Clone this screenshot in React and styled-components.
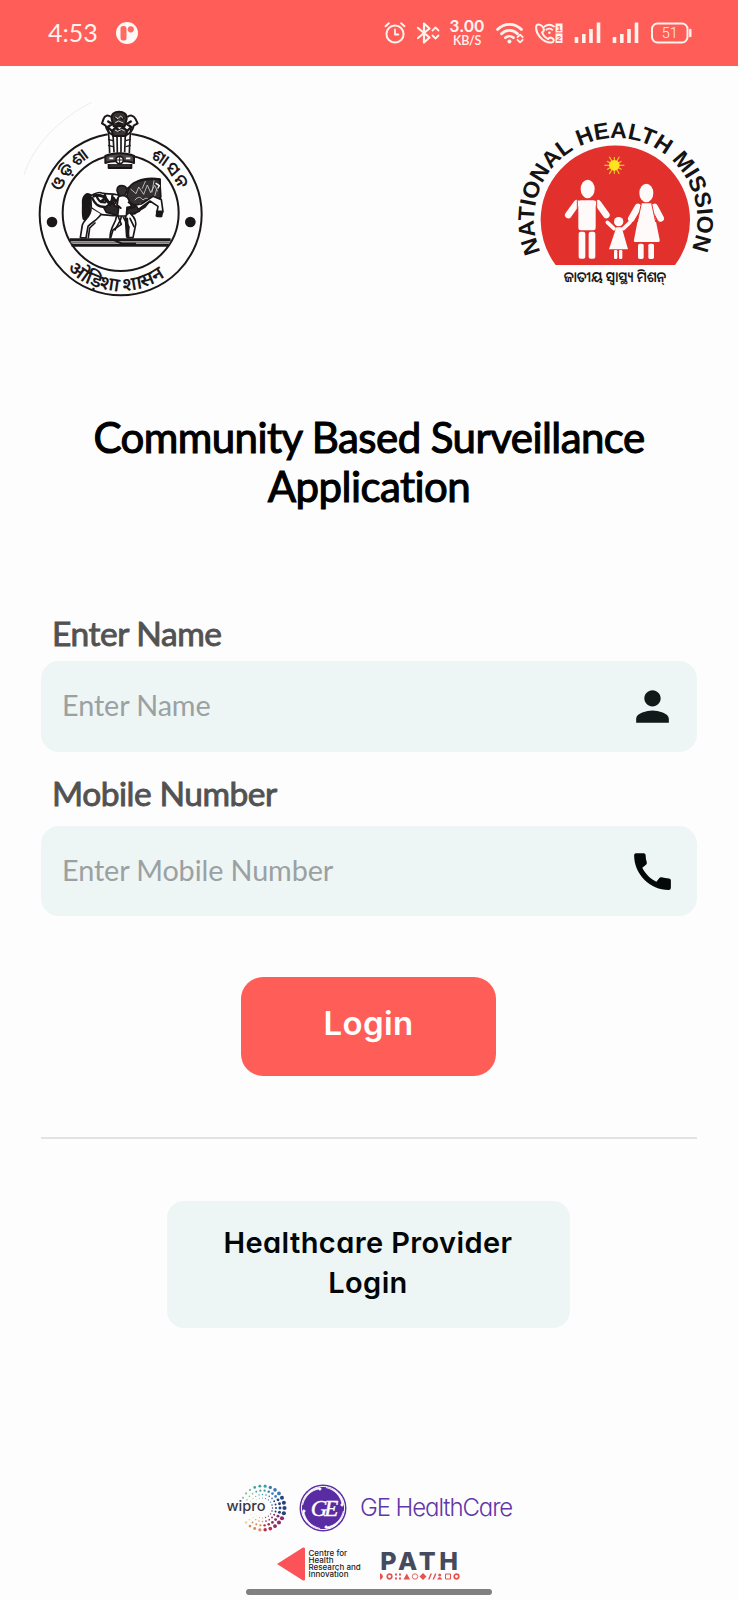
import React from 'react';
import styled, { createGlobalStyle } from 'styled-components';
import { MdPerson, MdCall } from 'react-icons/md';

const point = (cx, cy, r, deg) => [
  cx + r * Math.cos((deg * Math.PI) / 180),
  cy + r * Math.sin((deg * Math.PI) / 180)
];

const StatusIcons = () => (
  <StyledStatusIcons>
    <StyledIcon $w={22} viewBox="0 0 22 24">
      <circle cx="11" cy="13" r="8.6" strokeWidth="2" />
      <path d="M11 8.5v5h3.4" strokeWidth="1.8" />
      <path d="M1.5 5.2l3.4-2.9M20.5 5.2l-3.4-2.9" strokeWidth="2" />
    </StyledIcon>
    <StyledIcon $w={24} $left={10} viewBox="0 0 24 24">
      <path d="M2 7l11.5 9.5L8 21.500V2.500l5.500 5L2 17" strokeWidth="2.200" />
      <path d="M16.500 9.500l3-3 3 3M16.500 14.500l3 3 3-3" strokeWidth="1.800" />
    </StyledIcon>
    <StyledSpeed>
      <StyledSpeedValue>3.00</StyledSpeedValue>
      <StyledSpeedUnit>KB/S</StyledSpeedUnit>
    </StyledSpeed>
    <StyledIcon $w={29} $left={11} viewBox="0 0 29 24">
      <path d="M1.500 8.500a16.500 16.500 0 0 1 24 0" strokeWidth="2.800" />
      <path d="M5.500 12.800a11 11 0 0 1 16 0" strokeWidth="2.800" />
      <path d="M9.300 16.800a6 6 0 0 1 8.200 0" strokeWidth="2.600" />
      <circle cx="13.400" cy="20.600" r="2" fill="#fff3ee" stroke="none" />
      <path d="M21.500 16.200l2.600-2.600 2.600 2.600M21.500 18.800l2.600 2.600 2.600-2.600" strokeWidth="1.800" />
    </StyledIcon>
    <StyledIcon $w={29} $left={9} viewBox="0 0 29 24">
      <path d="M2.500 4.500c-2 7 6 17.500 15 17 2.500-.3 3-3 1-4.200-1.700-1-3.200-1-4.300.8C11 16.500 9 14 8 11.500c2-1 2.300-2.500 1.400-4.600C8.200 4 4.200 2.500 2.500 4.500z" strokeWidth="2" />
      <path d="M10.500 5.500a8 8 0 0 1 9.500 0M12.300 8.800a5 5 0 0 1 6 0" strokeWidth="1.800" />
      <circle cx="15.400" cy="11.800" r="1.300" fill="#fff3ee" stroke="none" />
      <rect x="21.500" y="2.500" width="7" height="9" fill="#fff3ee" stroke="none" />
      <rect x="21.500" y="12.500" width="7" height="9.500" fill="#fff3ee" stroke="none" />
      <StyledSim x="25" y="10">1</StyledSim>
      <StyledSim x="25" y="20.300">2</StyledSim>
    </StyledIcon>
    <Signal left={11} />
    <Signal left={11} />
    <StyledIcon $w={41} $left={12} viewBox="0 0 41 24">
      <rect x="1" y="2.500" width="35.500" height="19" rx="5.500" strokeWidth="2" />
      <path d="M39.300 9v6" strokeWidth="2.400" />
      <StyledCharge x="18.700" y="17">51</StyledCharge>
    </StyledIcon>
  </StyledStatusIcons>
);

const Signal = ({ left }) => (
  <StyledIcon $w={27} $left={left} viewBox="0 0 27 24">
    <path d="M2.500 22v-6M9.800 22v-9M17 22V8M24.500 22V1.500" strokeWidth="3.600" strokeLinecap="butt" />
  </StyledIcon>
);

const StateEmblem = () => (
  <svg width="200" height="210" viewBox="0 0 600 630" fill="none" stroke="#1b1718">
    <defs>
      <path id="emblem-left" d="M124 290A188 188 0 0 1 222 181" />
      <path id="emblem-right" d="M390 188A190 190 0 0 1 480 290" />
      <path id="emblem-bottom" d="M142 524A229 229 0 0 0 456 528" />
    </defs>
    <path d="M12 240C40 150 120 70 215 22" stroke="#ededed" strokeWidth="3" />
    <circle cx="302" cy="358" r="243" strokeWidth="6" />
    <circle cx="302" cy="354" r="174" strokeWidth="6" />
    <circle cx="96" cy="381" r="16" fill="#1b1718" stroke="none" />
    <circle cx="511" cy="381" r="16" fill="#1b1718" stroke="none" />
    {/* lion capital */}
    <path d="M262 100h73l-4 75 14 14-8 30h-72l-10-30 12-14z" fill="#fdfdfd" stroke="none" />
    <g strokeWidth="6" strokeLinejoin="round">
      <path d="M275 72c-2-15 8-22 22-22s25 7 23 22l-6 22h-33z" fill="#3a3435" />
      <path d="M273 66c-9-7-19-5-22 5l-5 14 11 7c3 14 11 23 22 28M322 66c9-7 19-5 24 5l7 14-12 7c-3 14-11 23-22 28" />
      <path d="M262 78l15 9-14 9 15 14M335 78l-15 9 14 9-15 14M283 66l9 8M312 66l-8 8M287 86h23" strokeWidth="7" />
      <path d="M276 108l12-12 10 12 11-12 13 12-5 15h-38z" fill="#3a3435" />
      <path d="M286 66l8 5 8-8 7 7M286 83l10-5 14 6M285 105l8 4 12-6 9 5" stroke="#ddd" strokeWidth="3" />
      <path d="M264 98c3 24 4 47 5 76M333 98c-3 24-4 47-5 76M279 118l3 54M291 122l1 51M303 122v51M316 118l-2 54" strokeWidth="5" />
      <path d="M264 133l15 4M264 151l15 4M332 133l-15 4M332 151l-15 4" strokeWidth="4" />
      <path d="M256 183c23-11 64-11 86 0v21c-22-8-64-8-86 0z" fill="#4d4748" />
      <path d="M266 207v12h68v-12" fill="#343031" />
      <path d="M268 190h12M318 190h13" stroke="#fff" strokeWidth="5" />
      <circle cx="299" cy="195" r="11" fill="#fff" strokeWidth="5" />
      <path d="M299 186v18M290 195h18" strokeWidth="3" />
    </g>
    {/* horse and warrior */}
    <g strokeWidth="5" strokeLinejoin="round" strokeLinecap="round">
      <path d="M214 301c-15-11-26 2-26 20 1 17-2 35 2 50 6 8 15 5 17-5 5-20-2-38 10-53z" fill="#1b1718" />
      <path d="M212 302c12-3 19-14 34-8 14 5 26 0 48 6l60-42c20-9 43-9 66-6l2 76-17-2-15-14-25 22-20 22-65 6-35-3-31-20z" fill="#fdfdfd" />
      <path d="M325 286c3-26 46-37 94-33l3 52-9 12-18-5-20 24-26 16-20-12-12-25z" fill="#343031" />
      <path d="M252 339l25-18 26 24 25-5 35-8-5 17-22 8-48 3-29-8z" fill="#2b2728" />
      <path d="M222 303c17-8 24 3 34 3M244 320l12-11 14 19 10-19 12 18" strokeWidth="9" />
      <path d="M216 308c9 18 17 28 39 28M230 303c4 14 12 20 25 19M255 300c-3 13 3 20 14 22M277 302c-4 17 5 29 18 35" strokeWidth="7" />
      <path d="M333 283l15 13 8-20 15 22 11-28 10 23 12-22 8 17M345 315c10-13 18-8 24 0 9-9 16-5 19 2M350 336c8-12 17-13 25-8M376 259l-9 21M402 257l-6 34M410 282l-6 22" stroke="#d5d3d3" strokeWidth="2.500" />
      <path d="M213 340c1 25-20 32-26 50l-6 38 17 1 6-35c14-14 29-20 39-36" fill="#fdfdfd" />
      <path d="M225 384l-16 15-4 29M289 365c-1 20-19 29-19 63M305 362c-3 22-17 31-20 43" />
      <path d="M331 355c14 13 21 27 14 44l-6 29h-16l4-32-17-29" fill="#fdfdfd" />
      <path d="M390 318l24 16-5 29 13 1 7-14-5-36-25-10-35 23-17 3 8 13z" fill="#fdfdfd" />
      <path d="M410 349h15v15h-13z" fill="#1b1718" />
      <path d="M291 287c0-10 6-15 15-15s16 6 15 17l-9 16h-14z" fill="#343031" />
      <path d="M296 305c12-7 28-2 31 11l8 19-14 2-2 26h-26l3-25-14-7z" fill="#fdfdfd" />
      <path d="M294 363l10 25-25 17-7 23M316 364l4 62M330 370l12 25" />
      <path d="M320 372l4 52" strokeWidth="9" />
      <path d="M294 310l-3 20 11 9M326 322l17 8" strokeWidth="6" />
      <path d="M408 265l10 7-4 7" stroke="#fff" strokeWidth="4" />
    </g>
    <path d="M150 434h302" strokeWidth="8" />
    <path d="M155 451h291" strokeWidth="9" />
    <path d="M152 442h297" stroke="#777" strokeWidth="7" />
    <path d="M279 434l27 12h42" strokeWidth="6" />
    <StyledOdia $size={50}><textPath href="#emblem-left" textLength="136">ଓଡ଼ିଶା</textPath></StyledOdia>
    <StyledOdia $size={50}><textPath href="#emblem-right" textLength="132">ଶାସନ</textPath></StyledOdia>
    <StyledOdia $size={58}><textPath href="#emblem-bottom">ओड़िशा शासन</textPath></StyledOdia>
  </svg>
);

const rays = Array.from({ length: 12 }, (_, i) => i * 30);

const HealthMissionLogo = () => (
  <StyledMission width="225" height="195" viewBox="0 0 675 585">
    <defs>
      <path id="mission-arc" d="M107 441A245 245 0 1 1 557 441" />
    </defs>
    <path d="M152 480A224 224 0 1 1 510 480z" fill="#e2312d" />
    <StyledMissionText>
      <textPath href="#mission-arc" textLength="960" lengthAdjust="spacingAndGlyphs">NATIONAL HEALTH MISSION</textPath>
    </StyledMissionText>
    <g stroke="#f4c62a" strokeWidth="3.500">
      {rays.map(deg => {
        const [x, y] = point(328, 181, deg % 60 ? 25 : 30, deg);
        return <path key={deg} d={`M328 181L${x} ${y}`} />;
      })}
    </g>
    <circle cx="328" cy="181" r="16" fill="#ffe31f" />
    <g fill="#fffafa">
      <ellipse cx="248" cy="252" rx="21" ry="28" />
      <rect x="220" y="286" width="52" height="90" rx="7" />
      <rect x="221" y="380" width="20" height="81" rx="6" />
      <rect x="251" y="380" width="20" height="81" rx="6" />
      <ellipse cx="424" cy="264" rx="21" ry="28" />
      <path d="M412 295h25q5 0 6 6l21 103q1 7-6 7h-66q-7 0-5-7l20-103q1-6 5-6z" />
      <rect x="399" y="416" width="17" height="46" rx="5" />
      <rect x="430" y="416" width="17" height="46" rx="5" />
      <circle cx="341" cy="350" r="14" />
      <path d="M334 367h16l19 66h-57z" />
      <rect x="327" y="435" width="10" height="27" rx="4" />
      <rect x="342" y="435" width="10" height="27" rx="4" />
    </g>
    <g stroke="#fffafa" strokeLinecap="round" strokeWidth="20">
      <path d="M215 295l-25 35M279 295l25 35M399 306l-20 35M449 306l18 34" />
      <path d="M307 352l20 19M375 352l-20 19" strokeWidth="11" />
    </g>
    <g stroke="#e2312d" strokeWidth="3">
      <path d="M217 284v50M275 284v50M409 296l-12 55M440 296l12 55" />
    </g>
    <StyledOdiaCaption x="330" y="531" textLength="308" lengthAdjust="spacingAndGlyphs">
      ଜାତୀୟ ସ୍ୱାସ୍ଥ୍ୟ ମିଶନ୍
    </StyledOdiaCaption>
  </StyledMission>
);

const rings = [
  { r: 22, size: 2.1, count: 26 },
  { r: 17.5, size: 1.5, count: 26 },
  { r: 13.5, size: 1, count: 24 },
  { r: 10, size: 0.75, count: 20 }
];

const dotColor = deg => {
  if (deg < 25 || deg > 325) return '#27427c';
  if (deg < 60) return '#8a2b67';
  if (deg < 90) return '#b32f52';
  if (deg < 125) return '#dc8a58';
  if (deg < 180) return '#ead98c';
  if (deg < 240) return '#8cbf9a';
  if (deg < 285) return '#3b9fa0';
  return '#3c78b5';
};

const WiproLogo = () => (
  <svg width="61" height="50" viewBox="0 0 61 50">
    {rings.map(ring =>
      Array.from({ length: ring.count }, (_, i) => {
        const deg = (i * 360) / ring.count;
        if (deg > 150 && deg < 205) return null;
        const [x, y] = point(36.5, 25, ring.r, deg);
        const weight = 0.5 + 0.5 * Math.cos(((deg - 10) * Math.PI) / 360) ** 2;
        return <circle key={`${ring.r}-${i}`} cx={x} cy={y} r={ring.size * weight} fill={dotColor(deg)} />;
      })
    )}
    <StyledWipro x="0.500" y="28.300" textLength="39" lengthAdjust="spacingAndGlyphs">wipro</StyledWipro>
  </svg>
);

const swooshes = [0, 90, 180, 270];

const GeLogo = () => (
  <StyledGe width="48" height="48" viewBox="0 0 48 48">
    <circle cx="24" cy="24" r="23.500" fill="#5a2ca3" />
    <circle cx="24" cy="24" r="21.600" fill="none" stroke="#fff" strokeWidth="1" />
    {swooshes.map(deg => (
      <path
        key={deg}
        transform={`rotate(${deg} 24 24)`}
        d="M3.500 21C4.500 12 11 4.500 20 3.500c2 0 3 1.500 1.500 2.500-1 .6-2-.2-1.500-1C12 6.500 6 12 3.500 21z"
        fill="#fff"
        stroke="#fff"
        strokeWidth="0.600"
      />
    ))}
    <StyledMonogram x="24" y="32">GE</StyledMonogram>
  </StyledGe>
);

const PathMarks = () => (
  <svg width="80" height="7" viewBox="0 0 80 7" fill="#e5524f">
    <path d="M0 0q6 3.500 0 7z" />
    <circle cx="9.500" cy="3.500" r="2.300" fill="none" stroke="#e5524f" strokeWidth="1.700" />
    <path d="M15 .5h2v2h-2zM19 .5h2v2h-2zM15 4.500h2v2h-2zM19 4.500h2v2h-2zM23.500 6.500l3.300-6 3.300 6z" />
    <circle cx="35" cy="3.500" r="2.700" fill="none" stroke="#e5524f" strokeWidth=".9" />
    <path d="M43 0l3.500 3.500L43 7l-3.500-3.500zM48 6.500L50.500.5H52l-2.500 6zM52.500 6.500L55 .5h1.500l-2.500 6zM57 6.500q2.700-5 5.400 0z" />
    <circle cx="59.700" cy="2" r="1.500" />
    <path d="M65.500 1h5v5h-5z" fill="none" stroke="#e5524f" />
    <circle cx="76.500" cy="3.500" r="2.300" fill="none" stroke="#e5524f" strokeWidth="1.700" />
  </svg>
);

const Field = ({ label, placeholder, height, gap, top, icon }) => (
  <StyledField $top={top} $gap={gap}>
    <StyledLabel>{label}</StyledLabel>
    <StyledInputBox $height={height}>
      <StyledInput placeholder={placeholder} aria-label={label} />
      {icon}
    </StyledInputBox>
  </StyledField>
);

const App = () => (
  <StyledPage>
    <GlobalStyle />
    <StyledStatusBar>
      <StyledTime>4:53</StyledTime>
      <svg width="22" height="22" viewBox="0 0 22 22">
        <circle cx="11" cy="11" r="11" fill="#fff8f5" />
        <rect x="4.500" y="4" width="6" height="14.500" rx="2.500" fill="#ff6b63" />
        <circle cx="14.800" cy="7.300" r="3.100" fill="#ff6b63" />
      </svg>
      <StatusIcons />
    </StyledStatusBar>
    <StyledHeader>
      <StateEmblem />
      <HealthMissionLogo />
    </StyledHeader>
    <StyledTitle>Community Based Surveillance<br />Application</StyledTitle>
    <StyledForm onSubmit={e => e.preventDefault()}>
      <Field label="Enter Name" placeholder="Enter Name" height={91} gap={8} top={0} icon={<MdPerson size={49} color="#13191a" />} />
      <Field label="Mobile Number" placeholder="Enter Mobile Number" height={90} gap={13} top={21} icon={<MdCall size={49} color="#050808" />} />
      <StyledLoginButton>Login</StyledLoginButton>
      <StyledDivider />
      <StyledProviderButton type="button">Healthcare Provider<br />Login</StyledProviderButton>
    </StyledForm>
    <StyledFooter>
      <StyledPartners>
        <WiproLogo />
        <GeLogo />
        <StyledGeName>GE HealthCare</StyledGeName>
      </StyledPartners>
      <StyledPartners $second>
        <svg width="28" height="34" viewBox="0 0 28 34">
          <path d="M0 17L26 .5Q28 0 28 2v30q0 2-2 1.500z" fill="#fb5358" />
        </svg>
        <StyledCentre>Centre for<br />Health<br />Research and<br />Innovation</StyledCentre>
        <StyledPathLogo>
          <StyledPathName>PATH</StyledPathName>
          <PathMarks />
        </StyledPathLogo>
      </StyledPartners>
      <StyledHomeBar />
    </StyledFooter>
  </StyledPage>
);

const GlobalStyle = createGlobalStyle`
  * {
    box-sizing: border-box;
  }

  body {
    margin: 0;
    background-color: #fdfdfd;
  }
`;

const StyledPage = styled.div`
  width: 738px;
  height: 1600px;
  display: flex;
  flex-direction: column;
  overflow: hidden;
  background-color: #fdfdfd;
  font-family: Lato, sans-serif;

  svg {
    flex-shrink: 0;
  }
`;

const StyledStatusBar = styled.div`
  height: 66px;
  padding: 0 46px 0 48px;
  display: flex;
  align-items: center;
  background-color: #ff5d58;
  color: #fff3ee;
`;

const StyledTime = styled.span`
  width: 68px;
  padding-bottom: 2px;
  font-size: 25px;
`;

const StyledStatusIcons = styled.div`
  margin-left: auto;
  display: flex;
  align-items: center;
`;

const StyledIcon = styled.svg`
  width: ${props => props.$w}px;
  height: 24px;
  margin-left: ${props => props.$left || 0}px;
  fill: none;
  stroke: #fff3ee;
  stroke-linecap: round;
  stroke-linejoin: round;
`;

const StyledSim = styled.text`
  font: bold 8px "Liberation Sans", sans-serif;
  fill: #ff5d58;
  stroke: none;
  text-anchor: middle;
`;

const StyledCharge = styled.text`
  font: 300 14.5px Roboto, sans-serif;
  fill: #fff3ee;
  stroke: none;
  text-anchor: middle;
`;

const StyledSpeed = styled.div`
  width: 36px;
  margin-left: 9px;
  padding-bottom: 1px;
  display: flex;
  flex-direction: column;
  align-items: center;
`;

const StyledSpeedValue = styled.span`
  font-size: 17px;
  font-weight: bold;
  line-height: 15px;
  letter-spacing: 0.4px;
`;

const StyledSpeedUnit = styled.span`
  font-size: 12.5px;
  font-weight: 600;
  line-height: 15px;
  letter-spacing: -0.3px;
`;

const StyledHeader = styled.div`
  padding: 29px 8px 0 20px;
  display: flex;
  justify-content: space-between;
`;

const StyledOdia = styled.text`
  font-family: "Noto Sans Oriya", "Noto Sans Devanagari", "Noto Sans", sans-serif;
  font-size: ${props => props.$size}px;
  font-weight: 600;
  fill: #1b1718;
  stroke: none;
`;

const StyledOdiaCaption = styled.text`
  font: 600 44px "Noto Sans Oriya", "Noto Sans", sans-serif;
  fill: #1b1718;
  text-anchor: middle;
`;

const StyledMission = styled.svg`
  margin-top: 10px;
`;

const StyledMissionText = styled.text`
  font: bold 68px "Liberation Sans", sans-serif;
  fill: #151313;
`;

const StyledTitle = styled.h1`
  margin: 108px 0 0;
  font-size: 42px;
  font-weight: 400;
  line-height: 49px;
  letter-spacing: -0.55px;
  text-align: center;
  color: #000;
  -webkit-text-stroke: 1.1px #000;
`;

const StyledForm = styled.form`
  margin: 102px 41px 0;
  display: flex;
  flex-direction: column;
`;

const StyledField = styled.div`
  margin-top: ${props => props.$top}px;
  display: flex;
  flex-direction: column;
  gap: ${props => props.$gap}px;
`;

const StyledLabel = styled.span`
  padding-left: 11px;
  font-size: 33.5px;
  line-height: 40px;
  letter-spacing: -0.45px;
  color: #525252;
  -webkit-text-stroke: 0.9px #525252;
`;

const StyledInputBox = styled.div`
  height: ${props => props.$height}px;
  padding: 0 20px 0 21px;
  display: flex;
  align-items: center;
  border-radius: 18px;
  background-color: #eef5f5;
`;

const StyledInput = styled.input`
  flex: 1;
  min-width: 0;
  padding: 0 0 3px;
  border: none;
  outline: none;
  background: none;
  font-family: inherit;
  font-size: 28.8px;
  letter-spacing: -0.1px;

  &::placeholder {
    color: #9ba1a2;
    opacity: 1;
  }
`;

const StyledLoginButton = styled.button`
  align-self: center;
  width: 255px;
  height: 99px;
  margin: 61px 1px 0 0;
  padding: 0 0 8px;
  border: none;
  border-radius: 22px;
  background-color: #ff5d58;
  font-family: Inter, sans-serif;
  font-size: 33px;
  font-weight: 600;
  letter-spacing: 0.4px;
  color: #fff;
`;

const StyledDivider = styled.div`
  height: 2px;
  margin-top: 61px;
  background-color: #e3e3e3;
`;

const StyledProviderButton = styled.button`
  align-self: center;
  width: 403px;
  height: 127px;
  margin: 62px 2px 0 0;
  padding: 0 0 3px;
  border: none;
  border-radius: 17px;
  background-color: #eef5f5;
  font-family: Inter, sans-serif;
  font-size: 29px;
  font-weight: 600;
  font-feature-settings: "cv11" 1;
  line-height: 40px;
  letter-spacing: 0.4px;
  color: #020606;
`;

const StyledFooter = styled.div`
  margin-top: 155px;
  display: flex;
  flex-direction: column;
  align-items: center;
`;

const StyledPartners = styled.div`
  width: ${props => props.$second ? '185px' : '286px'};
  height: ${props => props.$second ? '34px' : '50px'};
  margin-top: ${props => props.$second ? '14px' : '0'};
  display: flex;
  align-items: center;
`;

const StyledWipro = styled.text`
  font: 500 14px Inter, sans-serif;
  fill: #383645;
`;

const StyledGe = styled.svg`
  margin-left: 12px;
`;

const StyledMonogram = styled.text`
  font: italic 23px "Liberation Serif", serif;
  letter-spacing: -3px;
  fill: #fff;
  stroke: #fff;
  stroke-width: 0.4px;
  text-anchor: middle;
`;

const StyledGeName = styled.span`
  margin-left: 13px;
  padding-bottom: 1px;
  font-family: Inter, sans-serif;
  font-size: 24px;
  font-weight: 300;
  font-feature-settings: "cv11" 1;
  letter-spacing: -1.1px;
  white-space: nowrap;
  color: #6236a8;
`;

const StyledCentre = styled.span`
  width: 76px;
  margin-left: 4px;
  font-family: Inter, sans-serif;
  font-size: 8px;
  font-weight: 500;
  line-height: 7px;
  white-space: nowrap;
  color: #222;
`;

const StyledPathLogo = styled.div`
  display: flex;
  flex-direction: column;
`;

const StyledPathName = styled.span`
  font-family: Inter, sans-serif;
  font-size: 25px;
  font-weight: 800;
  line-height: 24px;
  letter-spacing: 3.6px;
  color: #444b5e;
`;

const StyledHomeBar = styled.div`
  width: 246px;
  height: 6px;
  margin-top: 8px;
  border-radius: 3px;
  background-color: #808080;
`;

export default App;
